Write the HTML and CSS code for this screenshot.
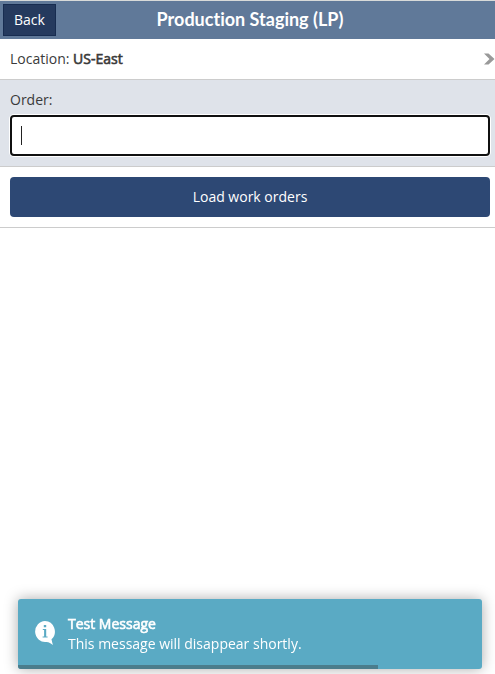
FILE: index.html
```html
<!DOCTYPE html>
<html lang="en">
<head>
<meta charset="utf-8">
<title>Production Staging (LP)</title>
<link rel="stylesheet" href="styles.css">
</head>
<body>
<header class="bar">
  <button class="back" type="button">Back</button>
  <h1 class="title">Production Staging (LP)</h1>
</header>
<main>
  <div class="row location">
    <span>Location: <b class="strong">US-East</b></span>
    <svg class="chevron" width="11" height="12" viewBox="0 0 11 12"><path d="M0 0.5H4.5L10.5 6L4.5 11.5H0L5.5 6Z" fill="#999"/></svg>
  </div>
  <div class="row order">
    <label class="label">Order:</label>
    <div class="field"><span class="caret"></span></div>
  </div>
  <div class="row actions">
    <button class="load" type="button">Load work orders</button>
  </div>
</main>
<div class="toast">
  <svg class="info" width="20" height="24" viewBox="0 0 20 24">
    <path d="M10 0A10 10.500 0 1 0 11.500 20.900C14 21.200 16 22.300 18 24C17.300 22 17 20.500 16.500 18.300A10 10.500 0 0 0 10 0Z" fill="#fff"/>
    <path d="M8.800 4H11.200V6.300H8.800ZM7.800 8H11.200V15.500H12.600V16.500H7.600V15.500H9.100V9H7.800Z" fill="#5aaac4"/>
  </svg>
  <div class="message">
    <div class="strong">Test Message</div>
    <div>This message will disappear shortly.</div>
  </div>
  <div class="progress"></div>
</div>
</body>
</html>
```

FILE: styles.css
```css
* {
  box-sizing: border-box;
}

body {
  margin: 0;
  height: 674px;
  overflow: hidden;
  background: #fff;
  color: #3a3a3a;
  font: 14px/20px "Open Sans", sans-serif;
}

button {
  padding: 0;
  color: #fff;
  font: inherit;
}

.bar {
  display: grid;
  grid-template-columns: 53px 1fr 48px;
  align-items: center;
  height: 39px;
  padding: 0 3px;
  border-top: 1px solid #d8dad9;
  background: #607999;
}

.back {
  height: 32px;
  border: 1px solid #172c50;
  background: #253a5e;
}

.title {
  margin: 0;
  padding-bottom: 2px;
  text-align: center;
  color: #fff;
  font: bold 18px/24px Lato, sans-serif;
  font-variant-ligatures: none;
}

.row {
  border-bottom: 1px solid #ccc;
}

.location {
  display: flex;
  align-items: center;
  justify-content: space-between;
  height: 41px;
  padding: 0 0 0 10px;
}

.strong {
  font-weight: 400;
  -webkit-text-stroke: 0.6px currentColor;
}

.order {
  height: 87px;
  padding: 10px 5px 0 10px;
  background: #dfe3ea;
}

.label {
  display: block;
  margin-bottom: 5px;
}

.field {
  display: flex;
  align-items: center;
  height: 41px;
  padding-left: 9px;
  border: 2px solid #101010;
  border-radius: 4px;
  background: #fff;
  box-shadow: 0 0 0 1px #fff;
}

.caret {
  width: 1px;
  height: 19px;
  background: #222;
}

.actions {
  height: 61px;
  padding: 10px 5px 0 10px;
}

.load {
  display: block;
  width: 100%;
  height: 40px;
  border: 0;
  border-radius: 4px;
  background: #2d4874;
}

.toast {
  position: fixed;
  left: 18px;
  top: 599px;
  display: flex;
  width: 464px;
  height: 70px;
  padding: 15px 17px;
  overflow: hidden;
  border-radius: 3px;
  background: #5aaac4;
  color: #fff;
  box-shadow: 0 0 14px #aaa;
}

.info {
  margin-top: 7px;
}

.message {
  margin-left: 13px;
}

.progress {
  position: absolute;
  left: 0;
  bottom: 0;
  width: 360px;
  height: 4px;
  background: #4b7d8c;
}
```
